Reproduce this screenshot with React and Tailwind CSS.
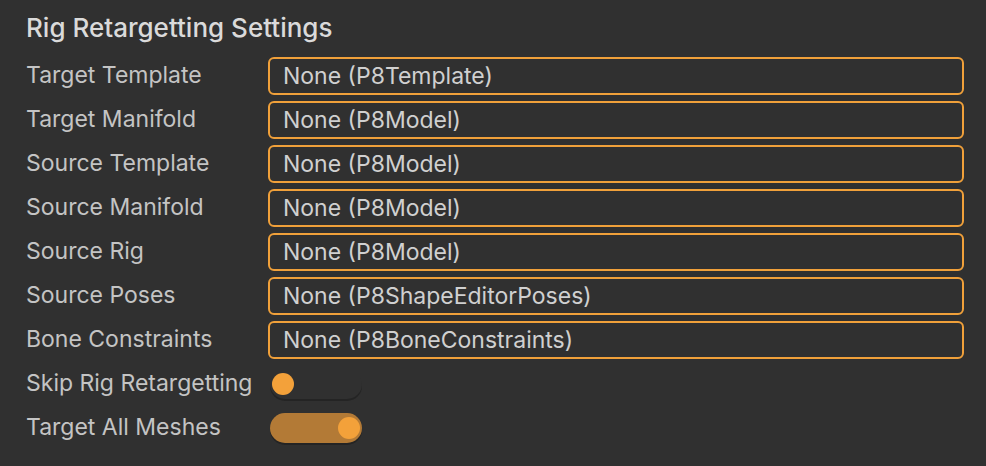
import React from 'react';

const fields = [
  { label: 'Target Template', value: 'None (P8Template)' },
  { label: 'Target Manifold', value: 'None (P8Model)' },
  { label: 'Source Template', value: 'None (P8Model)' },
  { label: 'Source Manifold', value: 'None (P8Model)' },
  { label: 'Source Rig', value: 'None (P8Model)' },
  { label: 'Source Poses', value: 'None (P8ShapeEditorPoses)' },
  { label: 'Bone Constraints', value: 'None (P8BoneConstraints)' },
];

function Toggle({ on }) {
  return (
    <div
      className={`w-[92px] h-[30px] rounded-full flex items-center px-[2px] ${
        on
          ? 'bg-[#b37a36] justify-end shadow-[0_2px_0_#242424]'
          : 'justify-start shadow-[0_2px_0_#242424]'
      }`}
    >
      <div className="w-[22px] h-[22px] rounded-full bg-[#f3a13a]" />
    </div>
  );
}

export default function App() {
  return (
    <div
      className="w-[986px] h-[466px] bg-[#303030] pl-[26px] pr-[22px] pt-[8px]"
      style={{ fontFamily: 'Inter, "Noto Sans", sans-serif' }}
    >
      <h1 className="h-[38px] flex items-center text-[26px] font-medium text-[#dadada]">
        Rig Retargetting Settings
      </h1>
      <div className="flex flex-col mt-[8px]">
        {fields.map(f => (
          <div key={f.label} className="h-[44px] flex items-center">
            <p className="w-[242px] text-[23px] text-[#c4c4c4] -mt-[2px]">{f.label}</p>
            <div className="flex-1 h-[38px] border-2 border-[#f0a03a] rounded-[6px] flex items-center pl-[13px]">
              <span className="text-[23px] text-[#d0d0d0]">{f.value}</span>
            </div>
          </div>
        ))}
        <div className="h-[44px] flex items-center">
          <p className="w-[244px] text-[23px] text-[#c4c4c4] -mt-[2px]">Skip Rig Retargetting</p>
          <Toggle on={false} />
        </div>
        <div className="h-[44px] flex items-center">
          <p className="w-[244px] text-[23px] text-[#c4c4c4] -mt-[2px]">Target All Meshes</p>
          <Toggle on />
        </div>
      </div>
    </div>
  );
}
